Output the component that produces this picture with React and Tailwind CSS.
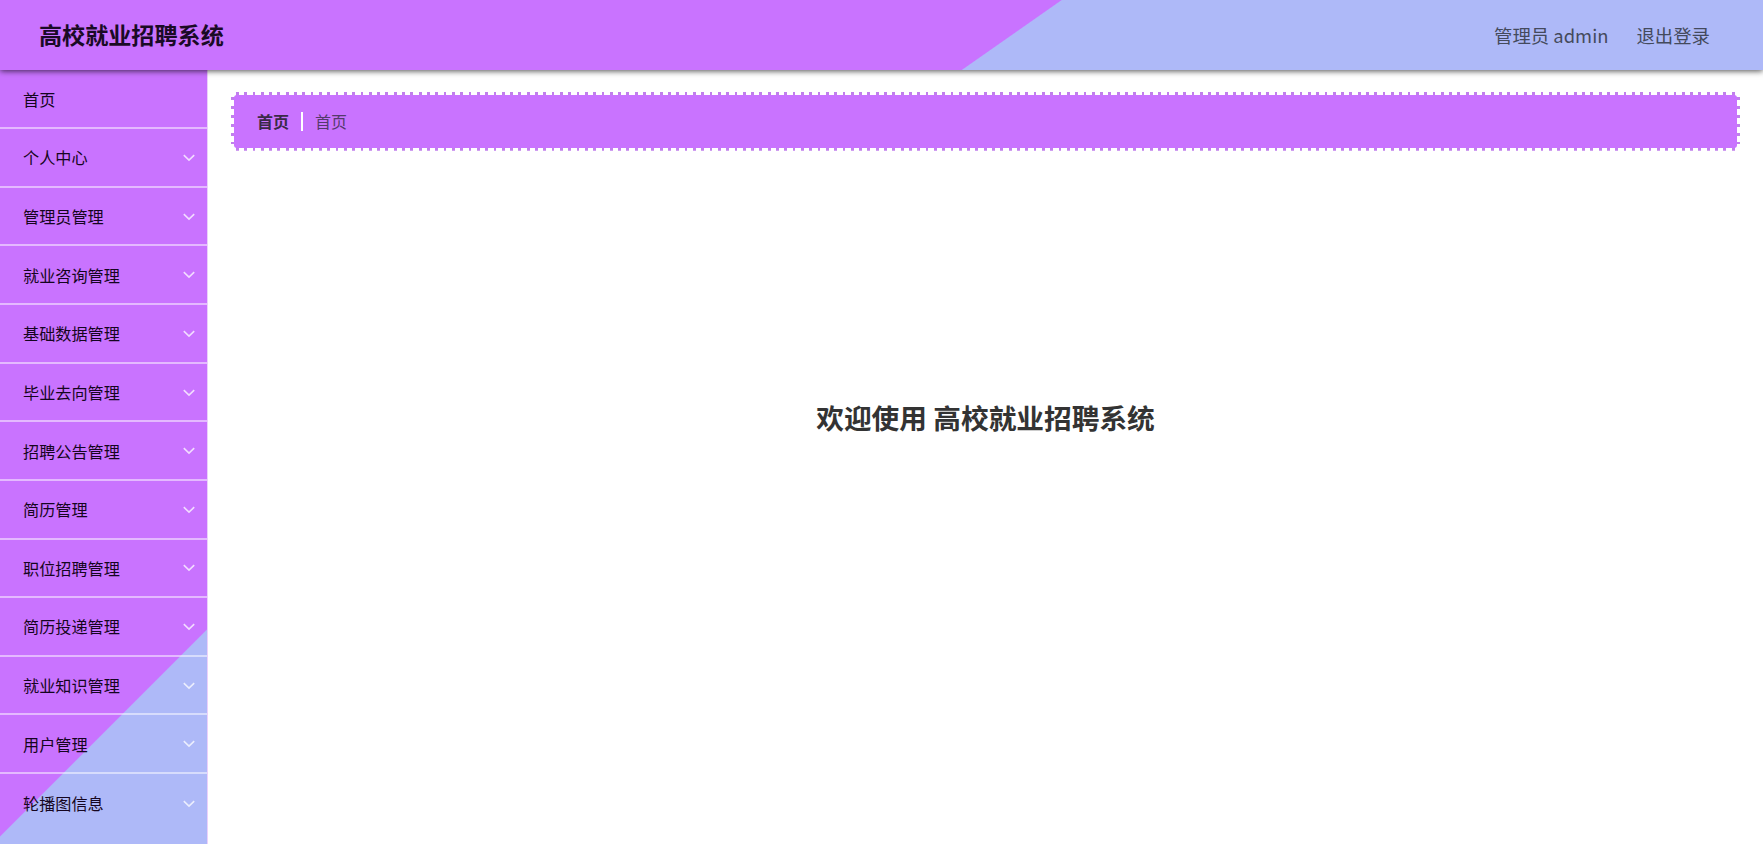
import clsx from "clsx";

const menus = [
  "首页",
  "个人中心",
  "管理员管理",
  "就业咨询管理",
  "基础数据管理",
  "毕业去向管理",
  "招聘公告管理",
  "简历管理",
  "职位招聘管理",
  "简历投递管理",
  "就业知识管理",
  "用户管理",
  "轮播图信息",
];

function Arrow() {
  return (
    <svg className="mt-[1px]" width="12" height="8" viewBox="0 0 12 8" fill="none" stroke="#fff" strokeOpacity="0.75" strokeWidth="1.6">
      <path d="M0.8 1.2 L6 6.2 L11.2 1.2" />
    </svg>
  );
}

function Header() {
  return (
    <header className="relative z-10 flex h-[70px] shrink-0 items-center justify-between bg-[linear-gradient(145deg,#c973ff_608.5px,#aeb9f8_609.5px)] pr-[53px] pl-[39px] shadow-[0_1px_6px_rgba(0,0,0,0.7)]">
      <div className="pb-[2px] text-[23.1px] font-bold text-[#1a0a26]">高校就业招聘系统</div>
      <div className="flex gap-[28px] pt-[1px] text-[18.4px] text-[#444a5c]">
        <span>管理员 admin</span>
        <span>退出登录</span>
      </div>
    </header>
  );
}

function Sidebar() {
  return (
    <aside className="w-[208px] shrink-0 border-r border-[#ebd0fb] bg-[linear-gradient(135deg,#c973ff_541.5px,#aeb9f8_542.5px)] pt-[0.6px]">
      {menus.map((name, i) => (
        <div
          key={name}
          className={clsx(
            "flex h-[58.63px] items-center justify-between pr-[12px] pl-[23px] text-[16.15px] text-[#150520]",
            i < menus.length - 1 && "border-b-2 border-white/50"
          )}
        >
          <span>{name}</span>
          {i > 0 && <Arrow />}
        </div>
      ))}
    </aside>
  );
}

// stamp style edge: small teeth on all four sides
function Breadcrumb() {
  return (
    <div className="bg-[image:repeating-linear-gradient(90deg,transparent_0_1.9px,#c07fec_1.9px_4.7px,transparent_4.7px_8.31px),repeating-linear-gradient(180deg,transparent_0_2.3px,#c07fec_2.3px_5.1px,transparent_5.1px_8.85px)] bg-[length:calc(100%-6px)_100%,100%_calc(100%-6px)] bg-center bg-no-repeat p-[3px]">
      <div className="flex h-[52.5px] items-center rounded-[3px] bg-[#c973ff] pl-[23px] text-[16px]">
        <span className="font-bold text-[#3a2a48]">首页</span>
        <span className="mr-[12px] ml-[12px] h-[19px] w-[2px] bg-white"></span>
        <span className="text-[#553a6c]">首页</span>
      </div>
    </div>
  );
}

function App() {
  return (
    <div className="flex h-[844px] w-full flex-col overflow-hidden bg-white font-['Noto_Sans_CJK_SC',sans-serif]">
      <Header />
      <div className="flex flex-1">
        <Sidebar />
        <main className="flex-1 pt-[22px] pr-[23px] pl-[23px]">
          <Breadcrumb />
          <h1 className="mt-[246px] text-center text-[27.7px] font-bold text-[#333]">欢迎使用 高校就业招聘系统</h1>
        </main>
      </div>
    </div>
  );
}

export default App;
